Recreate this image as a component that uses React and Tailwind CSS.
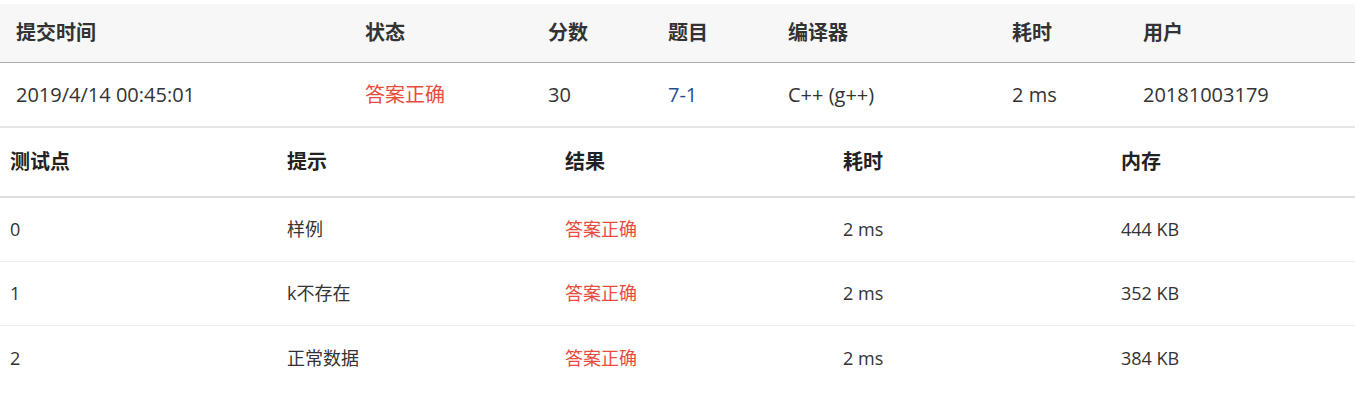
const FONT = { fontFamily: '"Segoe UI", "Open Sans", "Noto Sans CJK SC", sans-serif' }

const submission = {
  time: '2019/4/14 00:45:01',
  status: '答案正确',
  score: '30',
  problem: '7-1',
  compiler: 'C++ (g++)',
  duration: '2 ms',
  user: '20181003179',
}

const cases = [
  { id: '0', hint: '样例', result: '答案正确', time: '2 ms', memory: '444 KB' },
  { id: '1', hint: 'k不存在', result: '答案正确', time: '2 ms', memory: '352 KB' },
  { id: '2', hint: '正常数据', result: '答案正确', time: '2 ms', memory: '384 KB' },
]

const topCols = ['w-[349px]', 'w-[183px]', 'w-[120px]', 'w-[120px]', 'w-[224px]', 'w-[131px]', 'flex-1']
const caseCols = ['w-[277px]', 'w-[278px]', 'w-[278px]', 'w-[278px]', 'flex-1']

export default function App() {
  return (
    <div className="w-[1355px] h-[406px] bg-white text-[#333]" style={FONT}>
      <div className="pt-[4px] text-[20px]">
        <div className="flex items-center h-[59px] bg-[#f7f7f7] border-b border-[#aaa] pl-[16px] font-bold">
          {['提交时间', '状态', '分数', '题目', '编译器', '耗时', '用户'].map((label, i) => (
            <div key={label} className={topCols[i]}>{label}</div>
          ))}
        </div>
        <div className="flex items-center h-[65px] border-b-2 border-[#e6e6e6] pl-[16px]">
          <div className={topCols[0]}>{submission.time}</div>
          <div className={`${topCols[1]} text-[#e74c3c]`}>{submission.status}</div>
          <div className={topCols[2]}>{submission.score}</div>
          <div className={`${topCols[3]} text-[#1d4f91]`}>{submission.problem}</div>
          <div className={topCols[4]}>{submission.compiler}</div>
          <div className={topCols[5]}>{submission.duration}</div>
          <div className={topCols[6]}>{submission.user}</div>
        </div>
      </div>

      <div className="text-[18px]">
        <div className="flex items-center h-[70px] border-b-2 border-[#ddd] pl-[10px] font-bold text-[20px] text-[#222]">
          {['测试点', '提示', '结果', '耗时', '内存'].map((label, i) => (
            <div key={label} className={caseCols[i]}>{label}</div>
          ))}
        </div>
        {cases.map((c, idx) => (
          <div
            key={c.id}
            className={`flex items-center h-[64px] pl-[10px] ${idx < cases.length - 1 ? 'border-b border-[#eee]' : ''}`}
          >
            <div className={caseCols[0]}>{c.id}</div>
            <div className={caseCols[1]}>{c.hint}</div>
            <div className={`${caseCols[2]} text-[#e74c3c]`}>{c.result}</div>
            <div className={caseCols[3]}>{c.time}</div>
            <div className={caseCols[4]}>{c.memory}</div>
          </div>
        ))}
      </div>
    </div>
  )
}
